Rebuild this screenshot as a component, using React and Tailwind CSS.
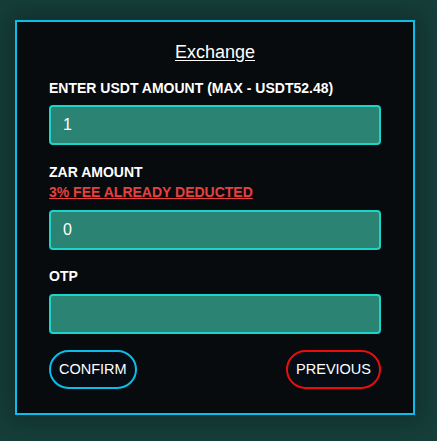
export default function App() {
  return (
    <div className="min-h-[441px] w-[437px] bg-[#163f3a] pt-5 pl-[15px] font-['Liberation_Sans',Arial,sans-serif]">
      <div className="w-[400px] h-[395px] border-2 border-[#0bbde8] bg-[#070b0e] px-8 pt-[16px] shadow-[0_0_24px_8px_rgba(0,0,0,0.25)]">
        <h2 className="text-center text-[18px] leading-7 text-white underline underline-offset-2">
          Exchange
        </h2>
        <div className="mt-[12px] text-[14px] leading-5 font-bold text-white">
          ENTER USDT AMOUNT (MAX - USDT52.48)
        </div>
        <input
          defaultValue="1"
          className="mt-[7px] block w-full h-10 rounded border-2 border-[#19d6c8] bg-[#2a8373] px-3 text-[16px] text-white outline-none"
        />
        <div className="mt-[17px] text-[14px] leading-5 font-bold text-white">
          ZAR AMOUNT
        </div>
        <div className="text-[14px] leading-5 font-bold text-[#e8403f] underline">
          3% FEE ALREADY DEDUCTED
        </div>
        <input
          defaultValue="0"
          className="mt-[8px] block w-full h-10 rounded border-2 border-[#19d6c8] bg-[#2a8373] px-3 text-[16px] text-white outline-none"
        />
        <div className="mt-[16px] text-[14px] leading-5 font-bold text-white">OTP</div>
        <input
          className="mt-[8px] block w-full h-10 rounded border-2 border-[#19d6c8] bg-[#2a8373] px-3 text-[16px] text-white outline-none"
        />
        <div className="mt-[16px] flex justify-between">
          <button className="h-[39px] rounded-full border-2 border-[#0bbde8] bg-[#050c14] px-[8px] text-[14.5px] text-white">
            CONFIRM
          </button>
          <button className="h-[39px] rounded-full border-2 border-[#ee0b0b] bg-[#050c14] px-[8px] text-[14.5px] text-white">
            PREVIOUS
          </button>
        </div>
      </div>
    </div>
  );
}
